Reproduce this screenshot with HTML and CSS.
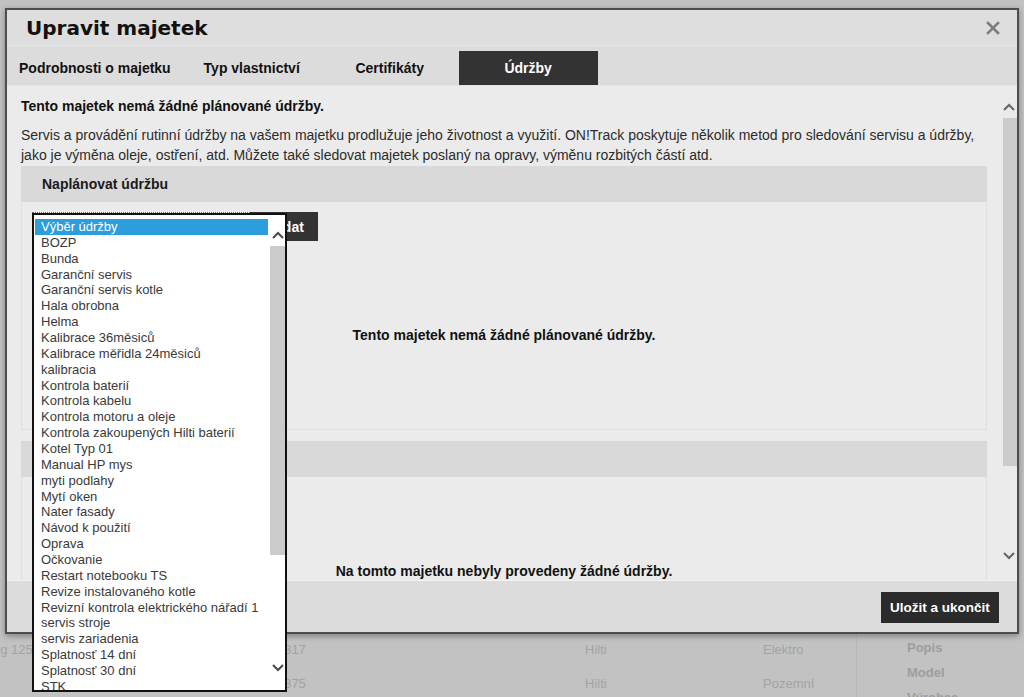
FILE: index.html
```html
<!DOCTYPE html><html><head>
	<meta charset="utf-8" />
	<title>Upravit majetek</title>
	<link rel="stylesheet" href="styles.css">
</head><body>
	<main class="page">
		<div class="table">
			<div class="row">
				<span class="cell cell--name">Kladivo Hilting 125</span>
				<span class="cell cell--serial">00880317</span>
				<span class="cell cell--maker">Hilti</span>
				<span class="cell cell--group">Elektro</span>
			</div>
			<div class="row">
				<span class="cell cell--name"></span>
				<span class="cell cell--serial">00880375</span>
				<span class="cell cell--maker">Hilti</span>
				<span class="cell cell--group">Pozemní</span>
			</div>
		</div>
		<aside class="filters">
			<div>Popis</div>
			<div>Model</div>
			<div>Výrobce</div>
		</aside>
	</main>

	<section class="modal">
		<header class="modal-head">
			<h1>Upravit majetek</h1>
			<button class="close" title="Zavřít">
				<svg width="14" height="14" viewBox="0 0 14 14"><path d="M2 2L12 12M12 2L2 12" stroke="#7d7d7d" stroke-width="2.6" stroke-linecap="square"/></svg>
			</button>
		</header>
		<nav class="tabs">
			<a href="#">Podrobnosti o majetku</a>
			<a href="#">Typ vlastnictví</a>
			<a href="#">Certifikáty</a>
			<a href="#" class="active">Údržby</a>
		</nav>

		<div class="modal-body">
			<div class="scroll-body">
				<p class="lead">Tento majetek nemá žádné plánované údržby.</p>
				<p class="intro">Servis a provádění rutinní údržby na vašem majetku prodlužuje jeho životnost a využití. ON!Track poskytuje několik metod pro sledování servisu a údržby, jako je výměna oleje, ostření, atd. Můžete také sledovat majetek poslaný na opravy, výměnu rozbitých částí atd.</p>

				<div class="panel">
					<div class="panel-head">Naplánovat údržbu</div>
					<div class="panel-body">
						<div class="add-form">
							<div class="select-box"></div>
							<button class="btn">Přidat</button>
						</div>
						<p class="empty">Tento majetek nemá žádné plánované údržby.</p>
					</div>
				</div>

				<div class="panel">
					<div class="panel-head"></div>
					<div class="panel-body">
						<p class="empty">Na tomto majetku nebyly provedeny žádné údržby.</p>
					</div>
				</div>
			</div>

			<div class="scrollbar scrollbar--main">
				<svg class="arrow" width="12" height="8" viewBox="0 0 12 8"><polyline points="1,7 6,2 11,7" fill="none" stroke="#666" stroke-width="2"/></svg>
				<div class="thumb thumb--main"></div>
				<div class="spacer"></div>
				<svg class="arrow" width="12" height="8" viewBox="0 0 12 8"><polyline points="1,1 6,6 11,1" fill="none" stroke="#666" stroke-width="2"/></svg>
			</div>
		</div>

		<footer class="modal-foot">
			<button class="btn btn--save">Uložit a ukončit</button>
		</footer>
	</section>

	<!-- open list of the maintenance select -->
	<div class="dropdown">
		<ul class="options">
			<li class="selected">Výběr údržby</li>
			<li>BOZP</li>
			<li>Bunda</li>
			<li>Garanční servis</li>
			<li>Garanční servis kotle</li>
			<li>Hala obrobna</li>
			<li>Helma</li>
			<li>Kalibrace 36měsiců</li>
			<li>Kalibrace měřidla 24měsiců</li>
			<li>kalibracia</li>
			<li>Kontrola baterií</li>
			<li>Kontrola kabelu</li>
			<li>Kontrola motoru a oleje</li>
			<li>Kontrola zakoupených Hilti baterií</li>
			<li>Kotel Typ 01</li>
			<li>Manual HP mys</li>
			<li>myti podlahy</li>
			<li>Mytí oken</li>
			<li>Nater fasady</li>
			<li>Návod k použití</li>
			<li>Oprava</li>
			<li>Očkovanie</li>
			<li>Restart notebooku TS</li>
			<li>Revize instalovaného kotle</li>
			<li>Revizní kontrola elektrického nářadí 1</li>
			<li>servis stroje</li>
			<li>servis zariadenia</li>
			<li>Splatnosť 14 dní</li>
			<li>Splatnosť 30 dní</li>
			<li>STK</li>
		</ul>
		<div class="scrollbar scrollbar--list">
			<svg class="arrow" width="12" height="8" viewBox="0 0 12 8"><polyline points="1,7 6,2 11,7" fill="none" stroke="#4a4a4a" stroke-width="2"/></svg>
			<div class="thumb thumb--list"></div>
			<div class="spacer"></div>
			<svg class="arrow" width="12" height="8" viewBox="0 0 12 8"><polyline points="1,1 6,6 11,1" fill="none" stroke="#4a4a4a" stroke-width="2"/></svg>
		</div>
	</div>
</body></html>
```

FILE: styles.css
```css
* {
	box-sizing: border-box;
}
body {
	font: 13px/16px "Liberation Sans", Arial, sans-serif;
	color: #333;
	margin: 0;
	height: 697px;
	overflow: hidden;
	background: #c2c2c2;
	position: relative;
}
p {
	margin: 0;
}
button {
	font: inherit;
	border: 0;
	cursor: pointer;
}

/* page behind the dialog */
.page {
	display: flex;
	padding-top: 633px;
	color: #a3a3a3;
}
.table {
	width: 857px;
	border-right: 1px solid #b9b9b9;
}
.row {
	display: flex;
	height: 34px;
	align-items: center;
	white-space: nowrap;
}
.cell {
	overflow: hidden;
}
.cell--name {
	width: 240px;
	text-indent: -75px;
}
.cell--serial {
	width: 345px;
	padding-left: 8px;
}
.cell--maker {
	width: 178px;
}
.filters {
	padding: 2px 0 0 50px;
	font-weight: bold;
	line-height: 25px;
	color: #9d9d9d;
}

/* dialog */
.modal {
	position: absolute;
	left: 5px;
	top: 8px;
	width: 1014px;
	height: 626px;
	border: 2px solid #4d4d4d;
	background: #dcdcdc;
	display: flex;
	flex-direction: column;
	box-shadow: 0 2px 6px rgba(0, 0, 0, .35);
}
.modal-head {
	height: 36px;
	display: flex;
	align-items: center;
	justify-content: space-between;
	padding: 0 19px;
	background: #dedede;
	border-bottom: 1px solid #e6e6e6;
}
.modal-head h1 {
	margin: 0;
	font: bold 20px/24px "DejaVu Sans", sans-serif;
	color: #111;
}
.close {
	background: none;
	padding: 0;
	margin-right: -2px;
	display: flex;
}

.tabs {
	height: 40px;
	display: flex;
	padding-top: 5px;
	border-bottom: 1px solid #e4e4e4;
}
.tabs a {
	min-width: 138px;
	padding: 0 12px;
	display: flex;
	align-items: center;
	justify-content: center;
	font-size: 14px;
	font-weight: bold;
	color: #111;
	text-decoration: none;
}
.tabs a.active {
	background: #333;
	color: #fff;
	min-width: 139px;
}

.modal-body {
	height: 494px;
	display: flex;
	background: #ebebeb;
}
.scroll-body {
	flex: 1;
	overflow: hidden;
	padding: 11px 13px 0 14px;
}
.lead {
	font-size: 14px;
	font-weight: bold;
	line-height: 18px;
	color: #111;
}
.intro {
	margin-top: 10px;
	font-size: 14px;
	line-height: 20px;
	color: #2b2b2b;
}

.panel {
	margin-top: 1px;
}
.panel + .panel {
	margin-top: 11px;
}
.panel-head {
	height: 36px;
	display: flex;
	align-items: center;
	padding-left: 21px;
	background: #d9d9d9;
	font-size: 14px;
	font-weight: bold;
	color: #1a1a1a;
}
.panel-body {
	display: flow-root;
	border: 1px solid #dfdfdf;
	border-top: 0;
	padding: 0 10px 84px;
}
.empty {
	padding-top: 84px;
	text-align: center;
	font-size: 14px;
	font-weight: bold;
	line-height: 20px;
	color: #111;
}

.add-form {
	display: flex;
	height: 29px;
	margin-top: 10px;
}
.select-box {
	width: 218px;
	border-top: 1px dotted #666;
	background: #fff;
}
.btn {
	background: #333;
	color: #fff;
	font-weight: bold;
	padding: 0 9px;
}
.add-form .btn {
	width: 68px;
	font-size: 14px;
}

/* open select list, drawn over the dialog */
.dropdown {
	position: absolute;
	left: 32px;
	top: 213px;
	width: 255px;
	height: 479px;
	border: 2px solid #111;
	background: #fff;
	display: flex;
	overflow: hidden;
	z-index: 2;
}
.options {
	list-style: none;
	margin: 4px 0 0 1px;
	padding: 0;
	width: 233px;
	color: #3a3a3a;
}
.options li {
	height: 15.86px;
	line-height: 16px;
	padding-left: 6px;
	white-space: nowrap;
}
.options li.selected {
	background: #2c9ede;
	color: #fff;
}

.scrollbar {
	display: flex;
	flex-direction: column;
	align-items: center;
}
.scrollbar .arrow {
	flex: none;
	margin: 7px 0;
}
.spacer {
	flex: 1;
}
.scrollbar--list {
	width: 15px;
	margin-left: 2px;
	padding: 9px 0 11px;
}
.thumb {
	background: #cbcbcb;
	width: 100%;
}
.thumb--list {
	height: 309px;
}
.scrollbar--main {
	width: 17px;
	padding: 10px 0 13px;
}
.scrollbar--main .thumb--main {
	height: 348px;
	width: 14px;
	margin-left: 3px;
}

.modal-foot {
	height: 52px;
	display: flex;
	justify-content: flex-end;
	align-items: flex-start;
	padding: 11px 18px 0 0;
	border-top: 1px solid #f4f4f4;
	background: #dcdcdc;
}
.btn--save {
	height: 31px;
	width: 118px;
	background: #2b2b2b;
	font-size: 13.5px;
}
```
